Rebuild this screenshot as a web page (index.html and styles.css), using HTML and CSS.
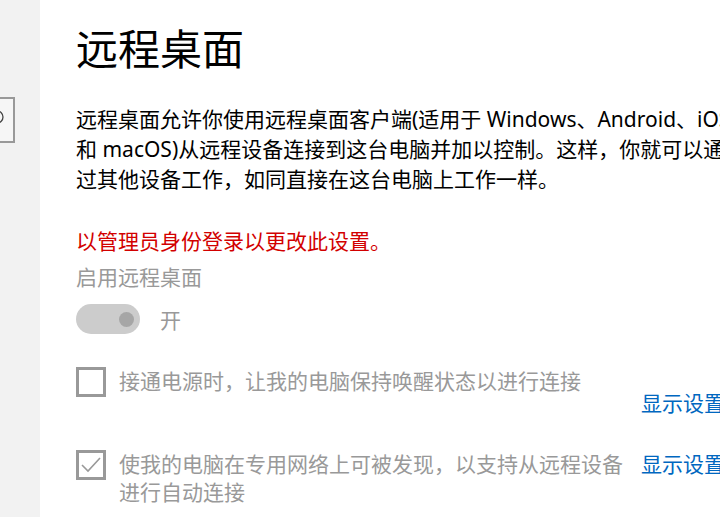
FILE: index.html
```html
<!DOCTYPE html>
<html lang="zh-CN">
<head>
    <meta charset="UTF-8">
    <title>远程桌面</title>
    <link rel="stylesheet" href="styles.css">
</head>
<body>
    <div class="layout">
        <div class="sidebar">
            <div class="search">
                <svg class="search-icon" width="20" height="20" viewBox="0 0 20 20">
                    <circle cx="10" cy="8" r="6" fill="none" stroke="#444" stroke-width="1.3"/>
                    <line x1="5.8" y1="12.2" x2="1" y2="17" stroke="#444" stroke-width="1.3"/>
                </svg>
            </div>
        </div>

        <div class="content">
            <h1>远程桌面</h1>
            <p class="desc">
                远程桌面允许你使用远程桌面客户端(适用于 Windows、Android、iOS 和<br>
                和 macOS)从远程设备连接到这台电脑并加以控制。这样，你就可以通过<br>
                过其他设备工作，如同直接在这台电脑上工作一样。
            </p>

            <p class="warn">以管理员身份登录以更改此设置。</p>
            <div class="field-label">启用远程桌面</div>
            <div class="toggle-row">
                <span class="toggle"><span class="knob"></span></span>
                <span class="toggle-text">开</span>
            </div>

            <div class="check-row">
                <span class="checkbox"></span>
                <span class="check-text">接通电源时，让我的电脑保持唤醒状态以进行连接</span>
                <a class="link link-low">显示设置</a>
            </div>

            <div class="check-row">
                <span class="checkbox">
                    <svg width="24" height="24" viewBox="0 0 24 24">
                        <polyline points="3,12 9,18 21,5" fill="none" stroke="#999" stroke-width="1.6"/>
                    </svg>
                </span>
                <span class="check-text">使我的电脑在专用网络上可被发现，以支持从远程设备进行自动连接</span>
                <a class="link">显示设置</a>
            </div>
        </div>
    </div>
</body>
</html>
```

FILE: styles.css
```css
html, body {
    margin: 0;
    padding: 0;
    height: 100%;
    overflow: hidden;
    background-color: #fff;
}
body {
    font-family: "Noto Sans", "Noto Sans CJK SC", sans-serif;
    color: #000;
}
.layout {
    display: flex;
    height: 100%;
}
.sidebar {
    width: 40px;
    flex-shrink: 0;
    background-color: #f2f2f2;
    padding-top: 97px;
    box-sizing: border-box;
    overflow: hidden;
}
.search {
    width: 200px;
    height: 46px;
    margin-left: -185px;
    border: 2px solid #999;
    box-sizing: border-box;
    background-color: #f6f6f6;
    position: relative;
}
.search-icon {
    position: absolute;
    right: 6px;
    top: 10px;
}
.content {
    padding-left: 36px;
    padding-top: 18px;
    white-space: nowrap;
}
h1 {
    margin: 0;
    font-family: "Noto Sans CJK SC", sans-serif;
    font-size: 42px;
    font-weight: 400;
    line-height: 58px;
}
.desc {
    margin: 28px 0 0;
    font-size: 21px;
    line-height: 30px;
}
.warn {
    margin: 32px 0 0;
    color: #d20000;
    font-size: 21px;
    line-height: 30px;
}
.field-label {
    margin-top: 6px;
    color: #999;
    font-size: 21px;
    line-height: 30px;
}
.toggle-row {
    display: flex;
    align-items: center;
    gap: 20px;
    margin-top: 12px;
    height: 30px;
}
.toggle {
    width: 64px;
    height: 30px;
    border-radius: 15px;
    background-color: #cccccc;
    display: flex;
    align-items: center;
    justify-content: flex-end;
    padding-right: 6px;
    box-sizing: border-box;
}
.knob {
    width: 15px;
    height: 15px;
    border-radius: 50%;
    background-color: #a6a6a6;
}
.toggle-text {
    color: #999;
    font-size: 21px;
}
.check-row {
    display: flex;
    align-items: flex-start;
    margin-top: 33px;
}
.checkbox {
    width: 30px;
    height: 30px;
    border: 3px solid #999;
    box-sizing: border-box;
    flex-shrink: 0;
    display: flex;
    align-items: center;
    justify-content: center;
}
.check-text {
    width: 506px;
    margin-left: 13px;
    color: #999;
    font-size: 21px;
    line-height: 28px;
    white-space: normal;
}
.link {
    margin-left: 16px;
    color: #0067c0;
    font-size: 21px;
    line-height: 28px;
}
.link-low {
    margin-top: 22px;
}
```
